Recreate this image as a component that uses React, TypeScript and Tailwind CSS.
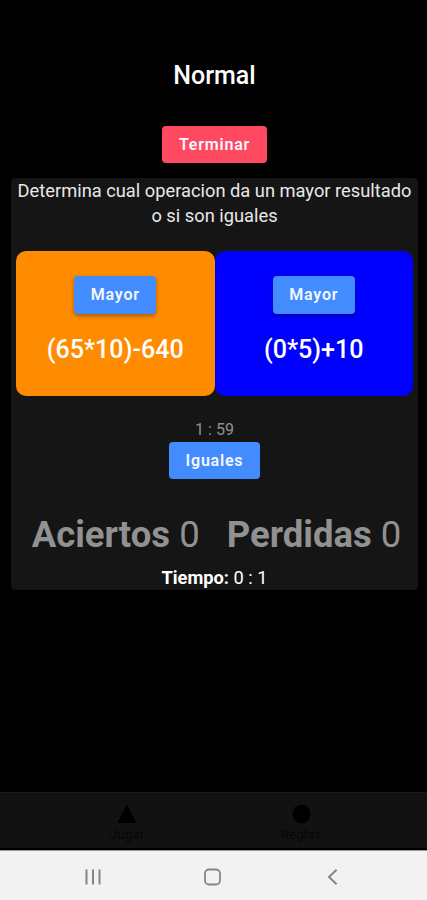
interface ButtonProps {
  label: string;
  className: string;
}

const Button = ({ label, className }: ButtonProps) => (
  <button
    className={`flex items-center justify-center rounded text-base leading-none font-semibold tracking-[0.8px] text-[#f4f7ff] ${className}`}
  >
    {label}
  </button>
);

interface OperationProps {
  text: string;
  className: string;
}

const Operation = ({ text, className }: OperationProps) => (
  <div className={`flex h-[145px] flex-1 flex-col items-center rounded-[10px] pt-[25px] ${className}`}>
    <Button label="Mayor" className="h-[38px] w-[82px] bg-[#428cff] shadow-[0_2px_4px_rgba(0,0,0,0.35)]" />
    <p className="mt-5 text-[25.1px] leading-8 font-medium whitespace-nowrap">{text}</p>
  </div>
);

const TabBar = () => (
  <nav className="flex h-[58px] shrink-0 justify-center border-t border-b-2 border-t-[#1c1c1c] border-b-black bg-[#121212] pl-px text-[13.5px] leading-4 text-[#060606]">
    <div className="flex w-[174px] flex-col items-center pt-[11px]">
      <svg width="20" height="20" viewBox="0 0 20 20" fill="black">
        <path d="M10 0.5 19.5 19H0.5Z" />
      </svg>
      <span className="mt-[2px]">Jugar</span>
    </div>
    <div className="flex w-[174px] flex-col items-center pt-[11px]">
      <svg width="20" height="20" viewBox="0 0 20 20" fill="black">
        <ellipse cx="10.5" cy="10" rx="9" ry="9.5" />
      </svg>
      <span className="mt-[2px]">Reglas</span>
    </div>
  </nav>
);

const SystemBar = () => (
  <footer className="flex h-[50px] shrink-0 items-center justify-center gap-[98px] border-t border-[#999] bg-[#f2f2f2] pt-[2px] pr-[2px] text-[#858585]">
    <svg width="22" height="20" viewBox="0 0 22 20" fill="none" stroke="currentColor" strokeWidth="2">
      <path d="M4.5 2.5v15M11 2.5v15M17.5 2.5v15" />
    </svg>
    <svg width="22" height="20" viewBox="0 0 22 20" fill="none" stroke="currentColor" strokeWidth="1.8">
      <rect x="3" y="2.5" width="15" height="15" rx="4" />
    </svg>
    <svg width="22" height="20" viewBox="0 0 22 20" fill="none" stroke="currentColor" strokeWidth="2">
      <path d="m14.6 2.7-7.6 7.3 7.6 7.3" />
    </svg>
  </footer>
);

export default function App() {
  return (
    <div className="flex h-[900px] w-[427px] flex-col overflow-hidden bg-black font-['Roboto',sans-serif] text-white">
      <header className="flex flex-col items-center pt-[61px] pl-[2px]">
        <h1 className="text-[25px] leading-[30px] font-medium">Normal</h1>
        <Button label="Terminar" className="mt-[35px] h-[37px] w-[105px] bg-[#ff4961]" />
      </header>

      <main className="mt-[15px] mr-[9px] ml-[11px] flex h-[412px] flex-col rounded bg-[#151515] px-[5px]">
        <p className="text-center text-[18.3px] leading-[25px] whitespace-nowrap text-[#e8e8e8]">
          Determina cual operacion da un mayor resultado
          <br />o si son iguales
        </p>

        <div className="mt-[23px] flex">
          <Operation text="(65*10)-640" className="bg-[#ff8c00]" />
          <Operation text="(0*5)+10" className="bg-[#0000ff]" />
        </div>

        <div className="mt-[22px] flex flex-col items-center">
          <span className="text-base leading-6 text-[#919191]">1 : 59</span>
          <Button label="Iguales" className="h-[37px] w-[91px] bg-[#428cff]" />
        </div>

        <div className="mt-[34px] flex justify-center gap-[27px] pl-[4px] text-[36.5px] leading-[44px] whitespace-nowrap text-[#919191]">
          <span>
            <b>Aciertos</b> 0
          </span>
          <span>
            <b>Perdidas</b> 0
          </span>
        </div>
        <p className="mt-[9px] text-center text-[18.3px] leading-6">
          <b>Tiempo:</b> 0 : 1
        </p>
      </main>

      <div className="flex-1" />
      <TabBar />
      <SystemBar />
    </div>
  );
}
